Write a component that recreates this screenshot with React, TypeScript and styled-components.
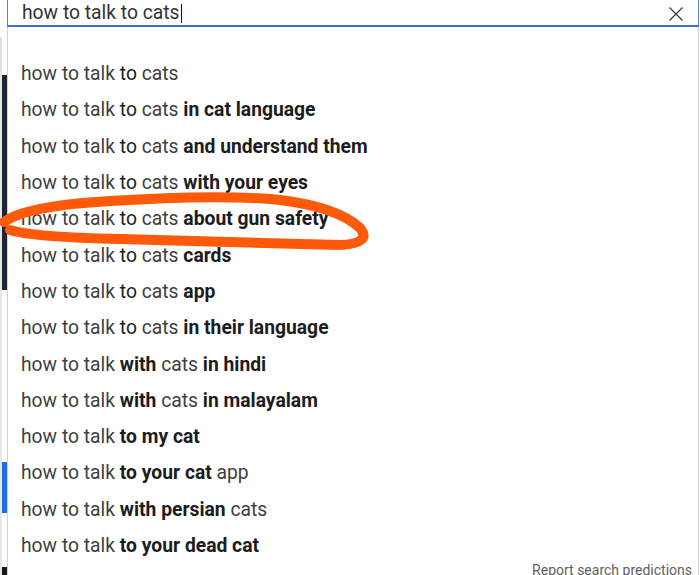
import React from "react";
import styled, { createGlobalStyle } from "styled-components";

const Global = createGlobalStyle`
  html, body { margin: 0; padding: 0; background: #ffffff; }
  body { font-family: Roboto, "Liberation Sans", Arial, sans-serif; overflow: hidden; }
  #root { width: 700px; height: 575px; overflow: hidden; }
`;

const Page = styled.div`
  position: relative;
  display: flex;
  width: 700px;
  height: 575px;
  overflow: hidden;
  background: #ffffff;
`;

const Backdrop = styled.div`
  display: flex;
  flex-direction: column;
  width: 7px;
  flex: none;
`;

const BackdropSegment = styled.div<{ $h: number; $color: string; $edge?: string }>`
  height: ${(p) => p.$h}px;
  flex: none;
  background: ${(p) => p.$color};
  border-left: 2px solid ${(p) => p.$edge || "#ffffff"};
  box-sizing: border-box;
`;

const Panel = styled.div`
  width: 692px;
  flex: none;
  display: flex;
  flex-direction: column;
`;

const SearchBox = styled.div`
  height: 37px;
  box-sizing: border-box;
  border: 1px solid #5b82cc;
  border-top: none;
  border-bottom: 2px solid #3f6fcb;
  display: flex;
  align-items: flex-start;
  padding: 1px 10px 0 14px;
`;

const QueryText = styled.div`
  flex: 1;
  font-size: 19.3px;
  line-height: 24px;
  color: #333333;
  display: flex;
  align-items: center;
`;

const Caret = styled.span`
  display: inline-block;
  width: 1px;
  height: 19px;
  background: #111111;
  margin-left: 1px;
`;

const ClearButton = styled.div`
  width: 20px;
  height: 20px;
  margin-top: 3px;
  margin-right: 2px;
  display: flex;
  align-items: center;
  justify-content: center;
`;

const Dropdown = styled.div`
  flex: 1;
  border-left: 1px solid #d3d3d3;
  border-right: 1px solid #d3d3d3;
  padding-top: 29.2px;
  display: flex;
  flex-direction: column;
`;

const Suggestion = styled.div`
  height: 36.3px;
  flex: none;
  line-height: 36.3px;
  font-size: 19.3px;
  color: #404040;
  padding-left: 13px;
  white-space: nowrap;
`;

const Strong = styled.b<{ $w?: number }>`
  font-weight: ${(p) => p.$w || 700};
  color: #1c1c1c;
`;

const ReportLine = styled.div`
  display: flex;
  justify-content: flex-end;
  margin-top: -4px;
  padding-right: 6px;
  font-size: 14px;
  line-height: 20px;
  color: #5f5f5f;
`;

const Scribble = styled.svg`
  position: absolute;
  left: 0;
  top: 0;
  pointer-events: none;
`;

type Part = [string, number?];

const rows: Part[][] = [
  [["how to talk "], ["to", 400], [" cats"]],
  [["how to talk "], ["to", 400], [" cats "], ["in cat language", 700]],
  [["how to talk "], ["to", 400], [" cats "], ["and understand them", 700]],
  [["how to talk "], ["to", 400], [" cats "], ["with your eyes", 700]],
  [["how to talk "], ["to", 400], [" cats "], ["about gun safety", 700]],
  [["how to talk "], ["to", 400], [" cats "], ["cards", 700]],
  [["how to talk "], ["to", 400], [" cats "], ["app", 700]],
  [["how to talk "], ["to", 400], [" cats "], ["in their language", 700]],
  [["how to talk "], ["with", 700], [" cats "], ["in hindi", 700]],
  [["how to talk "], ["with", 700], [" cats "], ["in malayalam", 700]],
  [["how to talk "], ["to my cat", 700]],
  [["how to talk "], ["to your cat", 700], [" app"]],
  [["how to talk "], ["with persian", 700], [" cats"]],
  [["how to talk "], ["to your dead cat", 700]],
];

const backdrop = [
  { h: 37, color: "#ffffff", edge: "#ffffff" },
  { h: 38, color: "#ffffff", edge: "#e2e2e2" },
  { h: 215, color: "#1e2431", edge: "#e6e6e6" },
  { h: 172, color: "#ffffff", edge: "#e6e6e6" },
  { h: 51, color: "#1f6fe0", edge: "#e6e6e6" },
  { h: 54, color: "#ffffff", edge: "#e6e6e6" },
  { h: 8, color: "#151922", edge: "#e6e6e6" },
];

export default function App() {
  return (
    <Page>
      <Global />
      <Backdrop>
        {backdrop.map((s, i) => (
          <BackdropSegment key={i} $h={s.h} $color={s.color} $edge={s.edge} />
        ))}
      </Backdrop>
      <Panel>
        <SearchBox>
          <QueryText>
            how to talk to cats
            <Caret />
          </QueryText>
          <ClearButton>
            <svg width="16" height="16" viewBox="0 0 16 16">
              <path d="M1.5 1.5 L14.5 14.5 M14.5 1.5 L1.5 14.5" stroke="#3c3c3c" strokeWidth="1.3" fill="none" />
            </svg>
          </ClearButton>
        </SearchBox>
        <Dropdown>
          {rows.map((parts, i) => (
            <Suggestion key={i}>
              {parts.map(([t, w], j) =>
                w ? (
                  <Strong key={j} $w={w}>
                    {t}
                  </Strong>
                ) : (
                  <React.Fragment key={j}>{t}</React.Fragment>
                )
              )}
            </Suggestion>
          ))}
          <ReportLine>Report search predictions</ReportLine>
        </Dropdown>
      </Panel>
      <Scribble width="700" height="575" viewBox="0 0 700 575">
        <path
          d="M4 222 C 20 210, 60 204, 110 201 C 170 197, 230 195, 280 200 C 320 205, 345 214, 360 228 C 368 238, 362 244, 340 245 C 280 244, 200 241, 120 239 C 70 238, 30 236, 10 230"
          stroke="#ff5a0a"
          strokeWidth="10"
          strokeLinecap="round"
          strokeLinejoin="round"
          fill="none"
        />
      </Scribble>
    </Page>
  );
}
